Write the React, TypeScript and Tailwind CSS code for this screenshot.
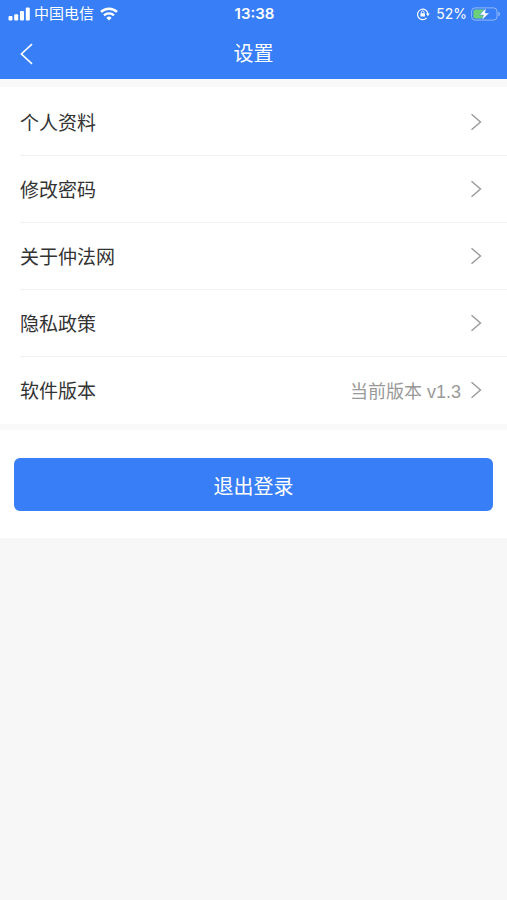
import React from 'react';

interface SettingItem {
    label: string;
    value?: string;
}

const items: SettingItem[] = [
    { label: '个人资料' },
    { label: '修改密码' },
    { label: '关于仲法网' },
    { label: '隐私政策' },
    { label: '软件版本', value: '当前版本 v1.3' }
];

const SignalIcon: React.FC = () => (
    <svg width="22" height="14" viewBox="0 0 22 14" fill="currentColor" aria-hidden="true">
        <rect x="0.5" y="9" width="4" height="4.5" rx="1" />
        <rect x="6.2" y="7.2" width="4" height="6.3" rx="1" />
        <rect x="12" y="4" width="4" height="9.5" rx="1" />
        <rect x="17.8" y="0.5" width="4" height="13" rx="1" />
    </svg>
);

const WifiIcon: React.FC = () => (
    <svg width="18" height="14" viewBox="0 0 18 14" fill="none" stroke="currentColor" aria-hidden="true">
        <path d="M1 4.9a11.6 11.6 0 0 1 16 0" strokeWidth="2.6" />
        <path d="M4 8.4a7.2 7.2 0 0 1 10 0" strokeWidth="2.4" />
        <path d="M9 13.6L6.4 10.9a3.7 3.7 0 0 1 5.2 0z" fill="currentColor" stroke="none" />
    </svg>
);

const RotationLockIcon: React.FC = () => (
    <svg width="14" height="14" viewBox="0 0 14 14" fill="none" stroke="currentColor" aria-hidden="true">
        <path d="M10.6 10.9A5.2 5.2 0 1 1 11.9 7" strokeWidth="1.2" />
        <path d="M10 6.6h3.8L11.9 9.2z" fill="currentColor" stroke="none" />
        <rect x="4.4" y="6.2" width="4.6" height="3.4" rx="0.5" fill="currentColor" stroke="none" />
        <path d="M5.4 6.4V5.3a1.3 1.3 0 0 1 2.6 0v1.1" strokeWidth="0.9" />
    </svg>
);

const BatteryIcon: React.FC = () => (
    <svg width="30" height="14" viewBox="0 0 30 14" fill="none" aria-hidden="true">
        <rect x="0.6" y="0.9" width="25.4" height="12.2" rx="3.4" stroke="#fff" strokeOpacity="0.45" />
        <path d="M27.4 4.8v4.4c1-.4 1.6-1.2 1.6-2.2s-.6-1.8-1.6-2.2z" fill="#fff" fillOpacity="0.5" />
        <path d="M4.4 2.6H13v8.8H4.4a2 2 0 0 1-2-2V4.6a2 2 0 0 1 2-2z" fill="#6bd078" />
        <path d="M15.2 1L8.4 8h4l-1.6 5.2L18.4 6h-4.2z" fill="#fff" stroke="#387ef7" strokeWidth="0.5" />
    </svg>
);

const StatusBar: React.FC = () => (
    <div className="grid grid-cols-3 items-center h-7 pl-2 pr-1.5 font-['Inter','Noto_Sans_CJK_SC',sans-serif] text-[15px]">
        <div className="flex items-center gap-1">
            <SignalIcon />
            <span className="pr-0.5">中国电信</span>
            <WifiIcon />
        </div>
        <div className="text-center font-semibold">13:38</div>
        <div className="flex items-center justify-end gap-1">
            <RotationLockIcon />
            <span className="pl-0.5 text-sm">52%</span>
            <BatteryIcon />
        </div>
    </div>
);

const SettingRow: React.FC<{ item: SettingItem }> = ({ item }) => (
    <li className="ml-5 border-b border-[#f1f1f1] last:border-transparent">
        <button type="button" className="flex w-full h-[66px] items-center pr-6 text-left">
            <span className="flex-1 pt-1 text-[19px] text-[#333]">{item.label}</span>
            {item.value && <span className="mr-2 pt-1 text-lg text-[#999]">{item.value}</span>}
            <svg width="14" height="18" viewBox="0 0 14 18" fill="none" stroke="#999" strokeWidth="1.4" aria-hidden="true">
                <path d="M2.5 1.2L11.5 9L2.5 16.8" />
            </svg>
        </button>
    </li>
);

const App: React.FC = () => {
    return (
        <div className="min-h-screen bg-[#f7f7f7] font-['Liberation_Sans','Noto_Sans_CJK_SC',sans-serif]">
            <header className="bg-[#387ef7] text-white">
                <StatusBar />
                <div className="grid grid-cols-3 items-center h-[51px] px-5">
                    <button type="button" aria-label="返回" className="justify-self-start">
                        <svg width="14" height="22" viewBox="0 0 14 22" fill="none" stroke="currentColor" strokeWidth="1.6" aria-hidden="true">
                            <path d="M12 1.2L1.4 11L12 20.8" />
                        </svg>
                    </button>
                    <h1 className="text-center text-xl">设置</h1>
                </div>
            </header>

            <main className="bg-white">
                <ul className="border-t-8 border-b-[6px] border-[#f9f9f9] pt-0.5">
                    {items.map((item) => (
                        <SettingRow key={item.label} item={item} />
                    ))}
                </ul>
                <div className="px-3.5 pt-7 pb-[27px]">
                    <button type="button" className="w-full h-[53px] pt-1 rounded-md bg-[#387ef7] text-xl text-white">
                        退出登录
                    </button>
                </div>
            </main>
        </div>
    );
};

export default App;
